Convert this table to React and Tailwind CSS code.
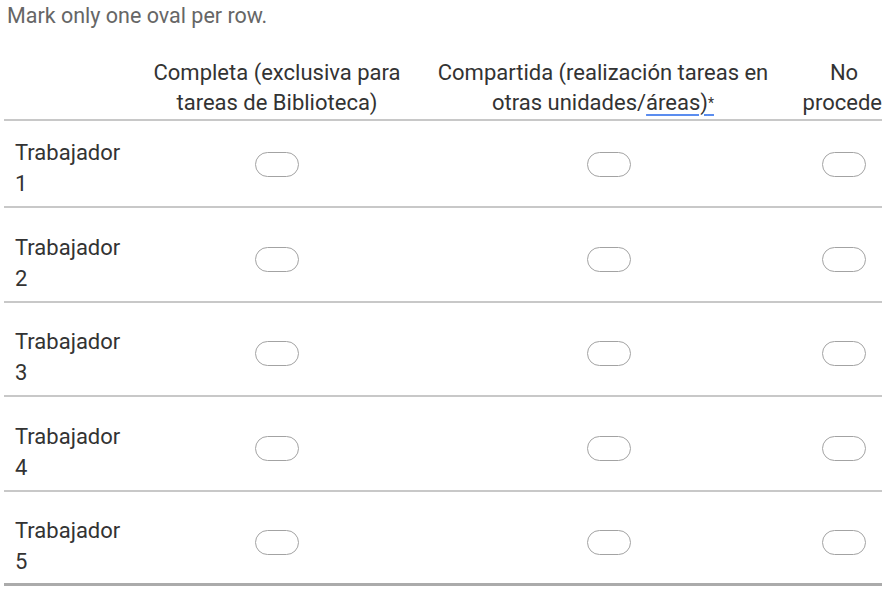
import React from "react";

const rows = [1, 2, 3, 4, 5];

function Oval() {
  return <div className="w-[44px] h-[25px] rounded-full border border-[#a3a3a3] bg-white" />;
}

export default function App() {
  const cols = "grid grid-cols-[146px_254px_398px_80px]";
  return (
    <div
      className="w-[896px] h-[595px] bg-white overflow-hidden text-[#333333]"
      style={{ fontFamily: "Roboto, 'Noto Sans', sans-serif" }}
    >
      <div className="pl-[7px] pt-[3px] text-[21.5px] leading-[26px] text-[#666666]">
        Mark only one oval per row.
      </div>
      <div className="ml-[4px] w-[878px] mt-[29px]">
        <div className={`${cols} border-b-2 border-[#c8c8c8] text-[22px] leading-[30px] text-center`}>
          <div />
          <div className="flex flex-col justify-end pb-[1px]">
            <span>Completa (exclusiva para</span>
            <span>tareas de Biblioteca)</span>
          </div>
          <div className="flex flex-col justify-end pb-[1px]">
            <span>Compartida (realización tareas en</span>
            <span>
              otras unidades/
              <span className="underline decoration-[#5b8def] decoration-2 underline-offset-[4px]">
                áreas)<span className="text-[14px] align-[2px]">*</span>
              </span>
            </span>
          </div>
          <div className="flex flex-col justify-end items-end pb-[1px]">
            <span className="w-[76px] text-center">No</span>
            <span>procede</span>
          </div>
        </div>
        {rows.map((n, i) => {
          const last = i === rows.length - 1;
          return (
            <div
              key={n}
              className={`${cols} items-center ${i === 0 ? "pt-[16px]" : "pt-[23.5px]"} ${
                last ? "pb-[5.5px] border-b-[3px] border-[#ababab]" : "pb-[7px] border-b-2 border-[#c8c8c8]"
              }`}
            >
              <div className="pl-[11px] text-[22px] leading-[31px]">
                <div>Trabajador</div>
                <div>{n}</div>
              </div>
              <div className="flex justify-center mb-[7px]">
                <Oval />
              </div>
              <div className="flex justify-center mb-[7px] pl-[12px]">
                <Oval />
              </div>
              <div className="flex justify-center mb-[7px] pl-[4px]">
                <Oval />
              </div>
            </div>
          );
        })}
      </div>
    </div>
  );
}
